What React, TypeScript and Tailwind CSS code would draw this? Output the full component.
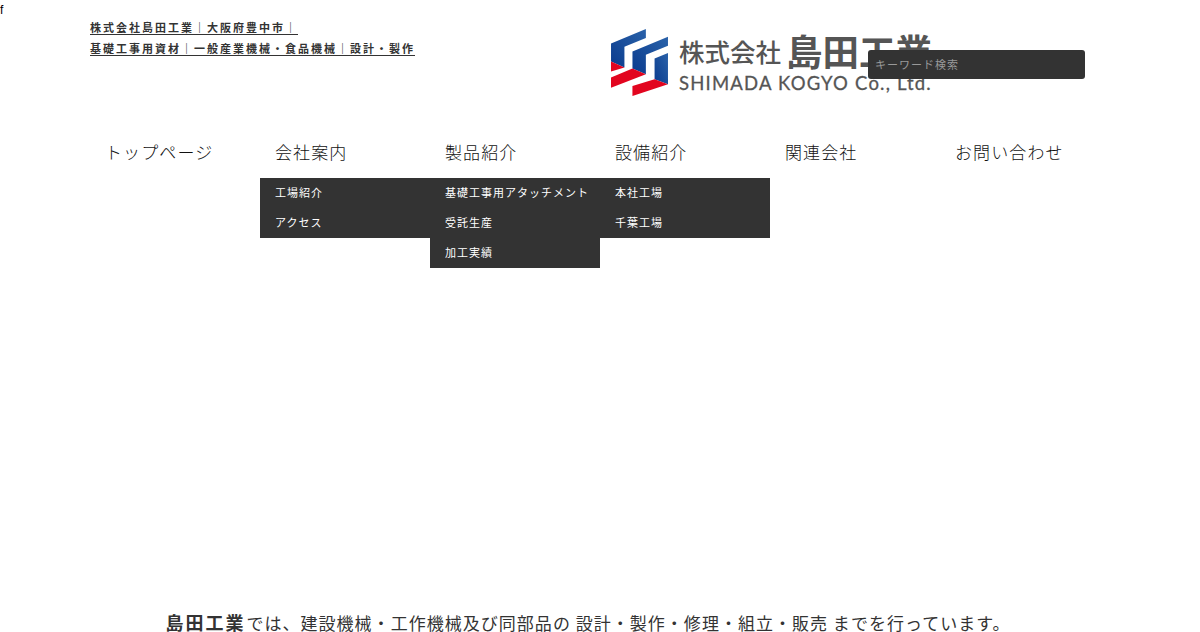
const FONT = "font-['Liberation_Sans','Noto_Sans_CJK_JP',sans-serif]";

interface NavItem {
  label: string;
  children?: string[];
}

const navItems: NavItem[] = [
  { label: 'トップページ' },
  { label: '会社案内', children: ['工場紹介', 'アクセス'] },
  { label: '製品紹介', children: ['基礎工事用アタッチメント', '受託生産', '加工実績'] },
  { label: '設備紹介', children: ['本社工場', '千葉工場'] },
  { label: '関連会社' },
  { label: 'お問い合わせ' },
];

function LogoMark() {
  return (
    <svg width="57" height="67" viewBox="18 15 170 200" className="mt-[4px] shrink-0">
      <defs>
        <linearGradient id="blue" x1="0" y1="1" x2="1" y2="0">
          <stop offset="0" stopColor="#0a3b8e" />
          <stop offset="1" stopColor="#2a62a9" />
        </linearGradient>
      </defs>
      <path d="M18 58 L122 15 L122 42 L58 68 L58 130 L18 112 Z" fill="url(#blue)" />
      <path d="M82 82 L188 38 L188 65 L122 92 L122 150 L82 133 Z" fill="url(#blue)" />
      <path d="M148 103 L188 87 L188 180 L148 165 Z" fill="url(#blue)" />
      <path d="M18 112 L58 130 L18 142 Z" fill="#e2051f" />
      <path d="M18 160 L82 133 L122 150 L18 190 Z" fill="#e2051f" />
      <path d="M82 185 L148 165 L188 180 L82 215 Z" fill="#e2051f" />
    </svg>
  );
}

export default function App() {
  return (
    <div className={`${FONT} relative h-[632px] overflow-hidden bg-white text-[#333]`}>
      <p className="h-[3px] text-xs leading-[20px] text-black">f</p>

      {/* Header */}
      <header className="mx-auto flex h-[122px] w-[1020px] items-start justify-between">
        <div className="pt-[15px] text-[11px] font-bold leading-[21px] tracking-[2px]">
          <p><span className="underline underline-offset-2">株式会社島田工業｜大阪府豊中市｜</span></p>
          <p><span className="underline underline-offset-2">基礎工事用資材｜一般産業機械・食品機械｜設計・製作</span></p>
        </div>

        <div className="relative mr-[25px] w-[474px] pt-[22px]">
          <div className="flex items-start">
            <LogoMark />
            <div className="mt-[6px] ml-[11px] text-[#555]">
              <div className="flex h-[40px] items-center font-['Noto_Sans_CJK_JP',sans-serif] font-medium whitespace-nowrap">
                <span className="text-[25.5px] leading-none">株式会社</span>
                <span className="ml-[5px] text-[36.5px] leading-none font-bold">島田工業</span>
              </div>
              <div className="font-['Lato',sans-serif] text-[18.5px] leading-[24px] tracking-[1.2px] whitespace-nowrap [-webkit-text-stroke:0.3px_#555]">
                SHIMADA KOGYO Co., Ltd.
              </div>
            </div>
          </div>
          <input
            placeholder="キーワード検索"
            className="absolute top-[47px] right-0 h-[29px] w-[217px] rounded-[3px] bg-[#333] px-[7px] text-[11px] tracking-[1px] text-white placeholder:text-[#999]"
          />
        </div>
      </header>

      {/* Navigation */}
      <nav className="mx-auto grid w-[1020px] grid-cols-6">
        {navItems.map((item) => (
          <div key={item.label} className="relative">
            <div className="h-[53px] px-[15px] pt-[17px] text-[17px] leading-[24px] tracking-[1.1px] font-light whitespace-nowrap text-[#111]">
              {item.label}
            </div>
            {item.children && (
              <ul className="absolute top-[53px] left-0 w-full bg-[#333]">
                {item.children.map((child) => (
                  <li key={child} className="h-[30px] pl-[15px] text-[11px] leading-[30px] tracking-[1px] whitespace-nowrap text-white">
                    {child}
                  </li>
                ))}
              </ul>
            )}
          </div>
        ))}
      </nav>

      {/* Lead text */}
      <p className="mt-[434px] pr-[24px] text-center text-[17px] leading-[24px] tracking-[1.03px] [word-spacing:-1px]">
        <strong className="mr-[1px] text-[18px] font-bold tracking-[2px]">島田工業</strong>では、建設機械・工作機械及び同部品の 設計・製作・修理・組立・販売 までを行っています。
      </p>
    </div>
  );
}
